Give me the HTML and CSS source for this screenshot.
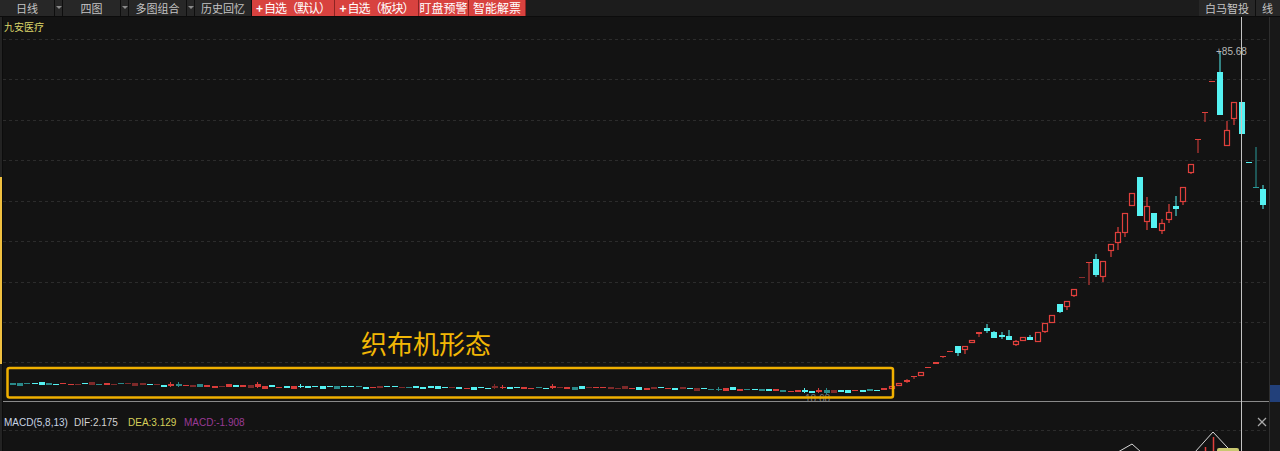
FILE: index.html
```html
<!DOCTYPE html>
<html lang="zh-CN">
<head>
    <meta charset="UTF-8">
    <meta name="viewport" content="width=device-width, initial-scale=1.0">
    <title>九安医疗 日线</title>
    <link rel="stylesheet" href="styles.css">
</head>
<body>

    <!-- Pasek narzędzi -->
    <div class="toolbar">
        <div class="tb-btn w-day">日线</div>
        <div class="tb-arrow"></div>
        <div class="tb-btn w-57">四图</div>
        <div class="tb-arrow"></div>
        <div class="tb-btn w-57">多图组合</div>
        <div class="tb-arrow"></div>
        <div class="tb-btn w-56">历史回忆</div>
        <div class="tb-red w-82 tight"><b>+</b>自选（默认）</div>
        <div class="tb-red w-83 tight"><b>+</b>自选（板块）</div>
        <div class="tb-red w-49">盯盘预警</div>
        <div class="tb-red w-56">智能解票</div>
        <div class="tb-spacer"></div>
        <div class="tb-btn w-56">白马智投</div>
        <div class="tb-btn w-last">线</div>
    </div>

    <div class="main">
        <div class="side-strip"><div class="side-mark"></div></div>

        <svg class="chart" viewBox="3 17 1266 434" width="1266" height="434">
            <!-- siatka -->
            <g class="grid">
                <line x1="3" x2="1269" y1="39.5" y2="39.5"/>
                <line x1="3" x2="1269" y1="79.5" y2="79.5"/>
                <line x1="3" x2="1269" y1="120.5" y2="120.5"/>
                <line x1="3" x2="1269" y1="160.5" y2="160.5"/>
                <line x1="3" x2="1269" y1="201.5" y2="201.5"/>
                <line x1="3" x2="1269" y1="241.5" y2="241.5"/>
                <line x1="3" x2="1269" y1="282.5" y2="282.5"/>
                <line x1="3" x2="1269" y1="322.5" y2="322.5"/>
                <line x1="3" x2="1269" y1="362.5" y2="362.5"/>
                <line x1="3" x2="1269" y1="430.5" y2="430.5"/>
            </g>

            <text class="stock-name" x="4" y="31">九安医疗</text>

            <g id="candles"></g>

            <text class="low-label" x="805" y="402">18.68</text>
            <rect class="pattern-box" x="7.5" y="368" width="885.5" height="29.5" rx="2"/>
            <text class="pattern-label" x="361" y="354">织布机形态</text>
            <text class="high-label" x="1216" y="55">+85.68</text>

            <!-- krzyż kursora -->
            <line class="cross-h" x1="3" x2="1269" y1="401.5" y2="401.5"/>
            <line class="cross-v" x1="1241.5" x2="1241.5" y1="17" y2="451"/>

            <!-- MACD -->
            <text class="legend l-macd" x="4" y="426">MACD(5,8,13)</text>
            <text class="legend l-dif" x="74" y="426">DIF:2.175</text>
            <text class="legend l-dea" x="128" y="426">DEA:3.129</text>
            <text class="legend l-val" x="184" y="426">MACD:-1.908</text>
            <g class="close-x">
                <line x1="1258" y1="418" x2="1266" y2="426"/>
                <line x1="1266" y1="418" x2="1258" y2="426"/>
            </g>
            <polyline class="macd-line" points="1118,452 1132,444 1141,452"/>
            <polyline class="macd-line" points="1195,452 1213,432 1227,447 1232,452"/>
            <line class="macd-bar" x1="1213.5" y1="437" x2="1213.5" y2="451"/>
            <line class="macd-bar" x1="1205.5" y1="447" x2="1205.5" y2="451"/>
            <rect class="macd-dea" x="1217" y="448" width="22" height="5" rx="2"/>
        </svg>

        <div class="right-panel"><div class="price-mark"></div></div>
    </div>

    <script>
        var NS = 'http://www.w3.org/2000/svg';
        var layer = document.getElementById('candles');

        function el(tag, attrs) {
            var e = document.createElementNS(NS, tag);
            for (var k in attrs) e.setAttribute(k, attrs[k]);
            layer.appendChild(e);
        }

        function rnd(i) {
            var s = Math.sin(i * 12.9898 + 3.1) * 43758.5453;
            return s - Math.floor(s);
        }

        // płaski odcinek - "织布机"
        var pts = [[8,384],[120,384],[160,385.5],[260,386.5],[320,387],[500,387.5],[680,388.5],[740,389.5],[800,391],[845,391.5],[870,390],[890,389]];
        function baseY(x) {
            for (var i = 1; i < pts.length; i++) {
                if (x <= pts[i][0]) {
                    var a = pts[i - 1], b = pts[i];
                    return a[1] + (b[1] - a[1]) * (x - a[0]) / (b[0] - a[0]);
                }
            }
            return pts[pts.length - 1][1];
        }
        var flatColors = { c: '#55f2f2', d: '#2a8a8a', r: '#d83c3a', k: '#7e2a2a' };
        for (var i = 0; i < 122; i++) {
            var x = Math.round(10 + i * 7.2);
            var r = rnd(i);
            var kind = r < 0.33 ? 'c' : r < 0.55 ? 'd' : r < 0.85 ? 'r' : 'k';
            var h = 1 + Math.floor(rnd(i + 50) * 2.4);
            var y = Math.round(baseY(x) + (rnd(i + 100) - 0.5) * 1.6 - h / 2);
            if (rnd(i + 200) < 0.12) {
                el('line', { x1: x + 2.5, x2: x + 2.5, y1: y - 2, y2: y + h + 1, stroke: flatColors[kind], 'stroke-width': 1 });
            }
            el('rect', { x: x, y: y, width: 6, height: h, fill: flatColors[kind] });
        }

        // wzrost: [x, góra korpusu, dół korpusu, góra knota, dół knota, typ]
        var rise = [
            [889,386,389,386,389,'r'], [896,383,386,383,386,'r'], [904,380,382,379,383,'r'],
            [911,376,377,376,379,'r'], [918,372,376,372,376,'r'], [925,367,368,367,368,'r'],
            [933,362,364,362,364,'r'], [940,356,357,356,358,'r'], [947,351,352,351,352,'r'],
            [955,346,353,346,356,'c'], [962,346,350,346,354,'r'], [969,340,343,340,343,'r'],
            [976,332,334,332,337,'r'], [984,328,331,324,333,'c'], [991,332,338,331,338,'c'],
            [999,335,337,332,339,'c'], [1006,336,340,330,340,'c'], [1013,341,345,340,346,'r'],
            [1020,337,341,337,341,'r'], [1027,337,340,335,340,'c'], [1035,332,342,332,342,'r'],
            [1042,323,332,323,333,'r'], [1049,315,323,315,323,'r'], [1057,304,312,304,313,'c'],
            [1064,301,307,301,310,'r'], [1071,289,296,289,297,'r'], [1079,277,278,277,278,'k'],
            [1086,262,263,262,285,'r'], [1093,259,275,254,277,'c'], [1100,261,277,261,282,'r'],
            [1108,244,251,244,257,'r'], [1115,232,243,227,250,'r'], [1122,213,233,213,237,'r'],
            [1129,193,206,193,206,'r'], [1137,177,216,177,216,'c'], [1144,206,222,197,230,'r'],
            [1151,213,228,213,228,'c'], [1159,223,231,219,234,'r'], [1166,212,220,204,223,'r'],
            [1173,206,209,196,216,'c'], [1180,187,202,187,205,'r'], [1188,164,173,164,174,'r'],
            [1195,139,140,139,153,'r'], [1202,112,113,112,122,'r'], [1209,81,82,81,82,'r'],
            [1217,72,115,52,115,'c'], [1224,130,146,121,146,'r'], [1231,102,119,102,125,'r'],
            [1239,102,134,102,134,'c'], [1246,162,163,162,163,'c'], [1253,187,188,147,188,'d'],
            [1260,189,205,185,209,'c']
        ];
        rise.forEach(function (c) {
            var x = c[0], top = c[1], bot = c[2], wt = c[3], wb = c[4], t = c[5];
            var col = t === 'c' ? '#55f2f2' : t === 'd' ? '#2a9a9a' : t === 'k' ? '#8a2e2e' : '#e0403c';
            if (t === 'c' || t === 'd' || bot - top <= 2) {
                el('line', { x1: x + 3, x2: x + 3, y1: wt, y2: wb, stroke: col, 'stroke-width': 1 });
                el('rect', { x: x, y: top, width: 6, height: Math.max(bot - top, 1), fill: col });
            } else {
                if (wt < top) el('line', { x1: x + 3, x2: x + 3, y1: wt, y2: top, stroke: col, 'stroke-width': 1.2 });
                if (wb > bot) el('line', { x1: x + 3, x2: x + 3, y1: bot, y2: wb, stroke: col, 'stroke-width': 1.2 });
                el('rect', { x: x + 0.5, y: top + 0.5, width: 5, height: bot - top - 1, fill: 'none', stroke: col, 'stroke-width': 1.2 });
            }
        });
    </script>

</body>
</html>
```

FILE: styles.css
```css
body {
    margin: 0;
    width: 1280px;
    height: 451px;
    overflow: hidden;
    background-color: #131313;
    font-family: "Noto Sans CJK SC", "Liberation Sans", sans-serif;
}

/* Pasek narzędzi */
.toolbar {
    display: flex;
    height: 17px;
    background-color: #1c1c1c;
    border-bottom: 1px solid #0c0c0c;
    box-sizing: border-box;
}

.tb-btn,
.tb-red {
    height: 16px;
    line-height: 16px;
    text-align: center;
    font-size: 11px;
    color: #c4c4c4;
    background-color: #272727;
    border-right: 1px solid #0e0e0e;
    box-sizing: border-box;
    white-space: nowrap;
}

.tb-red {
    font-size: 12px;
    color: #ffffff;
    background-color: #d8423f;
    border-right: 1px solid #8c2422;
}

.tb-red b {
    margin-right: 2px;
}

.tight {
    letter-spacing: -1px;
}

.tb-arrow {
    width: 8px;
    height: 16px;
    background-color: #272727;
    border-right: 1px solid #0e0e0e;
    box-sizing: border-box;
    position: relative;
}

.tb-arrow::after {
    content: '';
    position: absolute;
    top: 6px;
    left: 1px;
    border-left: 3px solid transparent;
    border-right: 3px solid transparent;
    border-top: 3px solid #8a8a8a;
}

.tb-spacer {
    flex: 1;
}

.w-day { width: 55px; }
.w-57 { width: 58px; }
.w-56 { width: 57px; }
.w-82 { width: 83px; }
.w-83 { width: 84px; }
.w-49 { width: 50px; }
.w-last { width: 24px; border-right: none; text-align: left; padding-left: 6px; }

/* Główna część */
.main {
    display: flex;
    height: 434px;
}

.side-strip {
    width: 3px;
    background-color: #232323;
    border-right: 1px solid #0c0c0c;
    box-sizing: border-box;
}

.side-mark {
    margin-top: 160px;
    height: 187px;
    width: 2px;
    background-color: #f0c040;
}

.chart {
    display: block;
    flex: none;
}

.right-panel {
    flex: 1;
    background-color: #181818;
    border-left: 1px solid #2e2e2e;
}

.price-mark {
    margin-top: 368px;
    height: 17px;
    background-color: #22407a;
}

/* Elementy wykresu */
.grid line {
    stroke: #2c2c2c;
    stroke-width: 1;
    stroke-dasharray: 3 3;
}

.stock-name {
    font-size: 10px;
    fill: #dcd66a;
}

.pattern-box {
    fill: none;
    stroke: #f0b000;
    stroke-width: 2.5;
}

.pattern-label {
    font-size: 26px;
    fill: #f2b705;
}

.high-label,
.low-label {
    font-family: "Liberation Sans", sans-serif;
    font-size: 10px;
    fill: #b8b8b8;
}

.low-label {
    fill: #7a7a7a;
}

.cross-h {
    stroke: #8a8a8a;
    stroke-width: 1;
}

.cross-v {
    stroke: #c4c4c4;
    stroke-width: 1;
}

.legend {
    font-family: "Liberation Sans", sans-serif;
    font-size: 10px;
}

.l-macd { fill: #c8d4e4; }
.l-dif { fill: #d4d4d4; }
.l-dea { fill: #d6d05a; }
.l-val { fill: #9a3a96; }

.close-x line {
    stroke: #a8a8a8;
    stroke-width: 1.3;
}

.macd-line {
    fill: none;
    stroke: #d8d8d8;
    stroke-width: 1;
}

.macd-bar {
    stroke: #e0403c;
    stroke-width: 1.5;
}

.macd-dea {
    fill: #c9c870;
}
```
